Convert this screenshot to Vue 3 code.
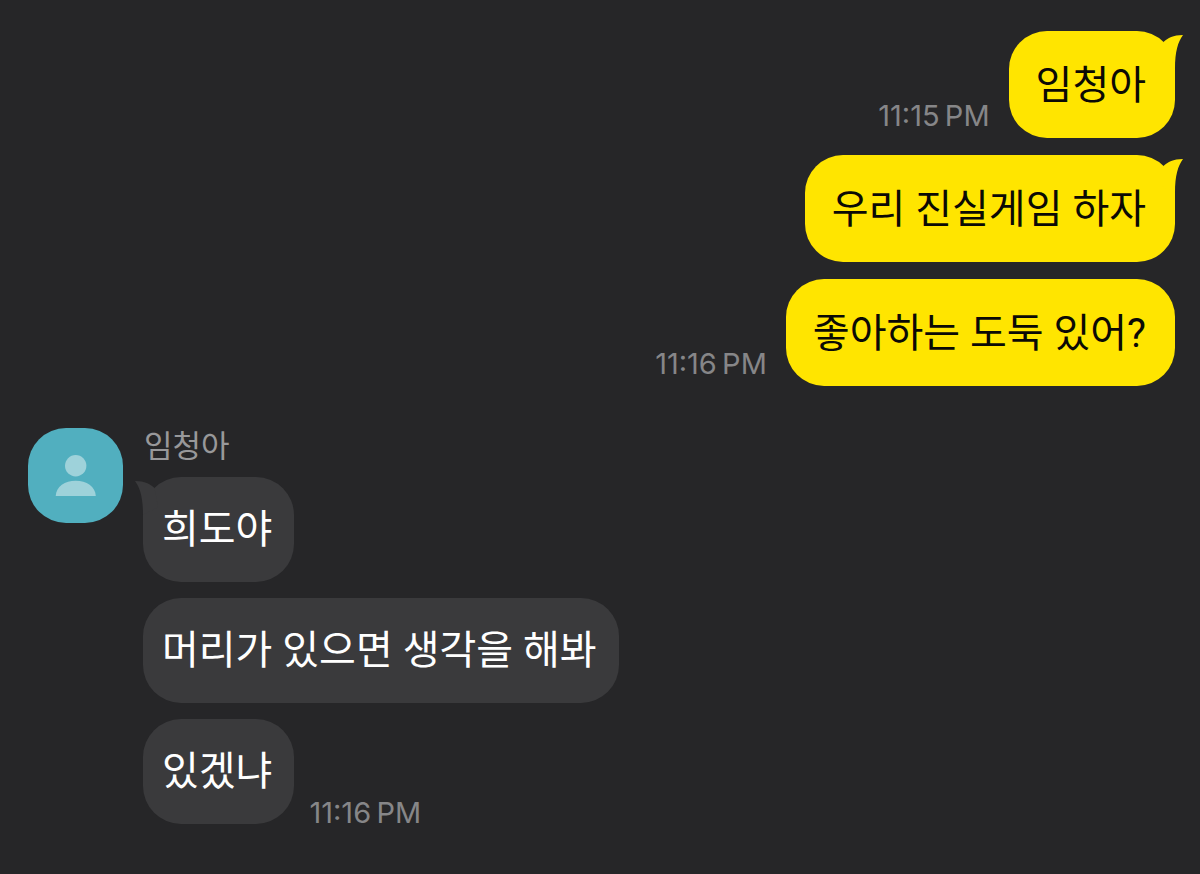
<script setup>
const sent = [
  { id: 1, text: '임청아', time: '11:15\u202fPM', tail: true },
  { id: 2, text: '우리 진실게임 하자', time: '', tail: true },
  { id: 3, text: '좋아하는 도둑 있어?', time: '11:16\u202fPM', tail: false },
]
const sender = '임청아'
const received = [
  { id: 4, text: '희도야', time: '', tail: true },
  { id: 5, text: '머리가 있으면 생각을 해봐', time: '', tail: false },
  { id: 6, text: '있겠냐', time: '11:16\u202fPM', tail: false },
]
</script>

<template>
  <main class="chat">
    <section class="sent">
      <div v-for="m in sent" :key="m.id" class="row row-sent">
        <time v-if="m.time" class="time">{{ m.time }}</time>
        <p class="bubble">
          {{ m.text }}
          <svg v-if="m.tail" class="tail" viewBox="0 0 24 40" aria-hidden="true">
            <path d="M3.500 11C8 7 13 4 23 4C18 11 15 20 15 38L0 30Z" />
          </svg>
        </p>
      </div>
    </section>

    <section class="received">
      <svg class="avatar" viewBox="0 0 95 95" aria-hidden="true">
        <rect class="avatar-bg" width="95" height="95" rx="38" />
        <circle class="avatar-fg" cx="47.700" cy="37.800" r="10.700" />
        <path class="avatar-fg" d="M27.700 68C28 58.500 37 52.700 47.700 52.700S67.500 58.500 67.800 68Z" />
      </svg>
      <div class="thread">
        <h2 class="name">{{ sender }}</h2>
        <div v-for="m in received" :key="m.id" class="row">
          <p class="bubble">
            {{ m.text }}
            <svg v-if="m.tail" class="tail" viewBox="0 0 24 40" aria-hidden="true">
              <path d="M20.500 11C16 7 11 4 1 4C6 11 9 20 9 38L24 30Z" />
            </svg>
          </p>
          <time v-if="m.time" class="time">{{ m.time }}</time>
        </div>
      </div>
    </section>
  </main>
</template>

<style>
body {
  margin: 0;
  background: #262628;
}
</style>

<style scoped>
.chat {
  box-sizing: border-box;
  min-height: 100vh;
  padding: 31px 25px 50px 28px;
  background: #262628;
  font-family: Inter, "Noto Sans CJK KR", sans-serif;
}
.sent {
  display: flex;
  flex-direction: column;
  gap: 17px;
}
.row {
  display: flex;
  align-items: flex-end;
  gap: 15px;
}
.row-sent {
  justify-content: flex-end;
  gap: 19px;
}
.bubble {
  position: relative;
  margin: 0;
  border-radius: 38px;
  font-family: Roboto, "Noto Sans CJK KR", sans-serif;
  font-size: 40px;
  line-height: 49px;
}
.sent .bubble {
  padding: 30px 29px 28px 27px;
  background: #ffe500;
  color: #0b0a05;
}
.received .bubble {
  padding: 28px 22px 28px 19px;
  background: #3a3a3c;
  color: #fff;
}
.tail {
  position: absolute;
  top: 0;
  width: 24px;
  height: 40px;
}
.sent .tail {
  right: -9px;
  fill: #ffe500;
}
.received .tail {
  left: -9px;
  fill: #3a3a3c;
}
.time {
  color: #868688;
  font-size: 29px;
  line-height: 22px;
  white-space: nowrap;
}
.sent .time {
  padding-bottom: 11px;
}
.received {
  display: flex;
  align-items: flex-start;
  gap: 20px;
  margin-top: 42px;
}
.avatar {
  flex: none;
  width: 95px;
  height: 95px;
}
.avatar-bg {
  fill: #51afbf;
}
.avatar-fg {
  fill: #9ed2da;
}
.thread {
  display: flex;
  flex-direction: column;
  gap: 16px;
}
.name {
  margin: 0 0 -3px;
  padding-left: 1px;
  color: #98989a;
  font-size: 31px;
  font-weight: 400;
  line-height: 36px;
}
</style>
